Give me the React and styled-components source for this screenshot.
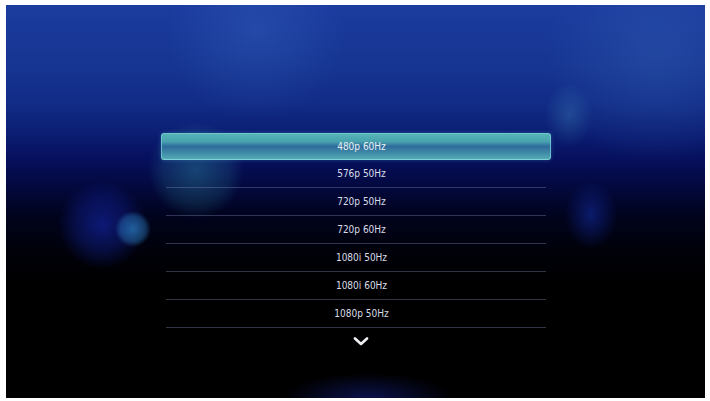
import styled, { createGlobalStyle } from "styled-components"

const GlobalStyle = createGlobalStyle`
  html, body {
    margin: 0;
    padding: 0;
    background: #ffffff;
  }
  body {
    font-family: "DejaVu Sans Condensed", "DejaVu Sans", sans-serif;
  }
`

const Frame = styled.div`
  width: 710px;
  height: 401px;
  padding: 5px 5px 3px 6px;
  box-sizing: border-box;
  background: #ffffff;
`

const Screen = styled.div`
  position: relative;
  width: 100%;
  height: 100%;
  overflow: hidden;
  display: flex;
  flex-direction: column;
  align-items: center;
  padding-top: 128px;
  box-sizing: border-box;
  background:
    radial-gradient(ellipse 85px 26px at 362px 394px, rgba(25, 40, 170, 0.45), rgba(25, 40, 170, 0) 100%),
    radial-gradient(circle 18px at 127px 224px, rgba(45, 130, 200, 0.7), rgba(45, 130, 200, 0.4) 70%, rgba(45, 130, 200, 0) 100%),
    radial-gradient(circle 44px at 96px 220px, rgba(20, 40, 180, 0.6), rgba(20, 40, 180, 0.3) 60%, rgba(20, 40, 180, 0) 100%),
    radial-gradient(ellipse 26px 34px at 585px 210px, rgba(20, 45, 170, 0.55), rgba(20, 45, 170, 0) 100%),
    radial-gradient(circle 48px at 190px 165px, rgba(50, 150, 170, 0.4), rgba(50, 150, 170, 0.18) 70%, rgba(50, 150, 170, 0) 100%),
    radial-gradient(ellipse 24px 32px at 563px 110px, rgba(70, 150, 190, 0.3), rgba(70, 150, 190, 0) 100%),
    radial-gradient(circle 90px at 250px 25px, rgba(60, 110, 200, 0.3), rgba(60, 110, 200, 0) 100%),
    radial-gradient(circle 110px at 650px 50px, rgba(60, 110, 190, 0.3), rgba(60, 110, 190, 0) 100%),
    linear-gradient(
      to bottom,
      #1b3b9e 0px,
      #163592 60px,
      #112b86 100px,
      #0b1d72 130px,
      #060f5c 155px,
      #030940 180px,
      #01031e 210px,
      #00010a 245px,
      #000000 280px,
      #000000 100%
    );
`

const List = styled.div`
  width: 390px;
  display: flex;
  flex-direction: column;
  align-items: center;
`

const Row = styled.div`
  width: 380px;
  height: 28px;
  display: flex;
  align-items: center;
  justify-content: center;
  padding-left: 12px;
  box-sizing: border-box;
  font-size: 10px;
  font-stretch: condensed;
  color: #d8dce6;
  border-bottom: 1px solid rgba(120, 130, 175, 0.4);
`

const SelectedRow = styled(Row)`
  width: 390px;
  height: 27px;
  color: #e8f0f2;
  border-radius: 3px;
  border: 1px solid rgba(120, 210, 215, 0.75);
  border-bottom-color: rgba(130, 215, 220, 0.9);
  background: linear-gradient(
    to bottom,
    #56b4b8 0%,
    #48a2ae 30%,
    #2f6c9c 50%,
    #3f8aa8 75%,
    #55aab6 100%
  );
  box-shadow: 0 0 4px rgba(80, 170, 200, 0.35);
`

const More = styled.div`
  margin-top: 9px;
  display: flex;
  justify-content: center;
  padding-left: 10px;
`

const modes = [
  "480p 60Hz",
  "576p 50Hz",
  "720p 50Hz",
  "720p 60Hz",
  "1080i 50Hz",
  "1080i 60Hz",
  "1080p 50Hz",
]

const App = () => {
  return (
    <Frame>
      <GlobalStyle />
      <Screen>
        <List>
          {modes.map((m, i) =>
            i === 0 ? (
              <SelectedRow key={m}>{m}</SelectedRow>
            ) : (
              <Row key={m}>{m}</Row>
            )
          )}
        </List>
        <More>
          <svg width="16" height="9" viewBox="0 0 16 9">
            <path
              d="M2 1.5 L8 7 L14 1.5"
              fill="none"
              stroke="#eef0f4"
              strokeWidth="2.6"
              strokeLinecap="round"
              strokeLinejoin="round"
            />
          </svg>
        </More>
      </Screen>
    </Frame>
  )
}

export default App
